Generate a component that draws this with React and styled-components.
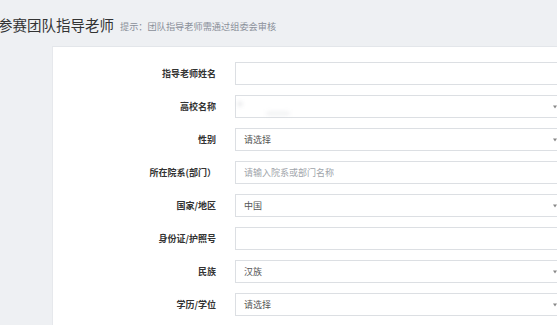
import React from "react";
import styled, { createGlobalStyle } from "styled-components";

const Global = createGlobalStyle`
  html, body { margin: 0; padding: 0; }
  body {
    background: #eef0f3;
    width: 557px;
    height: 325px;
    overflow: hidden;
    font-family: "Noto Sans CJK SC", "Noto Sans", sans-serif;
  }
`;

const Page = styled.div`
  width: 557px;
  height: 325px;
  overflow: hidden;
  display: flex;
  flex-direction: column;
`;

const Header = styled.div`
  height: 46px;
  display: flex;
  align-items: center;
  padding-top: 4px;
  box-sizing: border-box;
  flex-shrink: 0;
`;

const Title = styled.h1`
  margin: 0 0 0 -2px;
  font-size: 14.5px;
  font-weight: 400;
  color: #333;
  line-height: 1;
  white-space: nowrap;
`;

const Hint = styled.span`
  margin-left: 6px;
  margin-top: 2px;
  font-size: 9.2px;
  color: #8a8f99;
  white-space: nowrap;
`;

const Card = styled.div`
  margin-left: 52px;
  width: 560px;
  flex: 1;
  background: #fff;
  border-top: 1px solid #e3e6ea;
  border-left: 1px solid #e6e8ec;
  box-sizing: border-box;
  padding-top: 15px;
  display: flex;
  flex-direction: column;
  gap: 10px;
`;

const Row = styled.div`
  display: grid;
  grid-template-columns: 163px 340px;
  column-gap: 19px;
  align-items: center;
  height: 23px;
`;

const Label = styled.label`
  text-align: right;
  font-size: 9px;
  font-weight: 700;
  color: #333;
  white-space: nowrap;
`;

const Field = styled.div`
  position: relative;
  height: 23px;
  border: 1px solid #dcdfe3;
  box-sizing: border-box;
  background: #fff;
  display: flex;
  align-items: center;
  padding-left: 8px;
  font-size: 9px;
  color: ${(p) => (p.$placeholder ? "#a0a4aa" : "#555")};
`;

const Arrow = styled.span`
  position: absolute;
  left: 317px;
  top: 50%;
  transform: translateY(-50%);
  width: 0;
  height: 0;
  border-left: 2.5px solid transparent;
  border-right: 2.5px solid transparent;
  border-top: 3px solid #888;
`;

const Smudge = styled.span`
  position: absolute;
  background: #c9ccd1;
  filter: blur(2px);
  border-radius: 2px;
  opacity: ${(p) => p.$o};
`;

const rows = [
  { label: "指导老师姓名", value: "" },
  { label: "高校名称", value: "", select: true, blurred: true },
  { label: "性别", value: "请选择", select: true },
  { label: "所在院系(部门）", value: "请输入院系或部门名称", placeholder: true },
  { label: "国家/地区", value: "中国", select: true },
  { label: "身份证/护照号", value: "" },
  { label: "民族", value: "汉族", select: true },
  { label: "学历/学位", value: "请选择", select: true },
];

export default function App() {
  return (
    <Page>
      <Global />
      <Header>
        <Title>参赛团队指导老师</Title>
        <Hint>提示：团队指导老师需通过组委会审核</Hint>
      </Header>
      <Card>
        {rows.map((r) => (
          <Row key={r.label}>
            <Label>{r.label}</Label>
            <Field $placeholder={r.placeholder}>
              {r.value}
              {r.blurred && (
                <>
                  <Smudge $o={0.7} style={{ left: 2, top: 6, width: 4, height: 4 }} />
                  <Smudge $o={0.35} style={{ left: 30, top: 16, width: 24, height: 3 }} />
                </>
              )}
              {r.select && <Arrow />}
            </Field>
          </Row>
        ))}
      </Card>
    </Page>
  );
}
